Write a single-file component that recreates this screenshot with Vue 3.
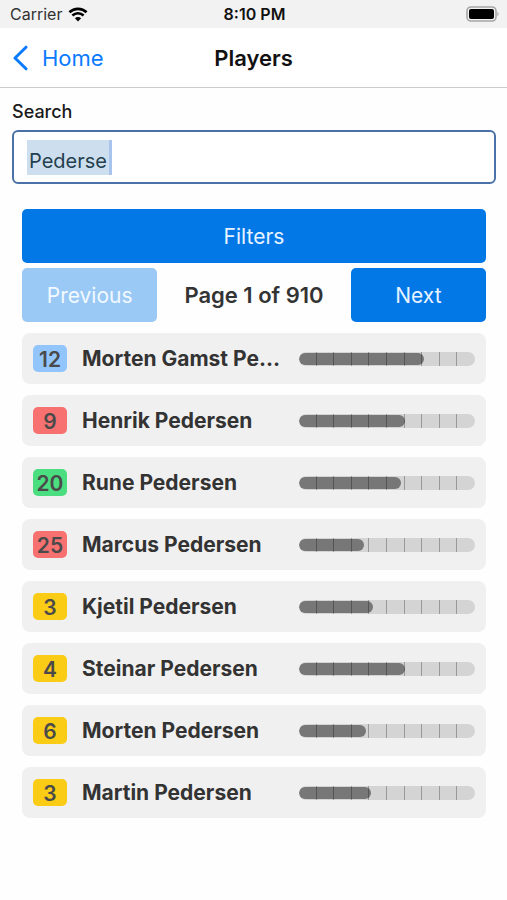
<script setup>
import { ref } from 'vue'

const search = ref('Pederse')
const page = ref(1)
const pageCount = 910

const players = [
  { number: 12, name: 'Morten Gamst Pedersen', position: 'midfielder', rating: 71 },
  { number: 9, name: 'Henrik Pedersen', position: 'forward', rating: 60 },
  { number: 20, name: 'Rune Pedersen', position: 'defender', rating: 58 },
  { number: 25, name: 'Marcus Pedersen', position: 'forward', rating: 37 },
  { number: 3, name: 'Kjetil Pedersen', position: 'keeper', rating: 42 },
  { number: 4, name: 'Steinar Pedersen', position: 'keeper', rating: 60 },
  { number: 6, name: 'Morten Pedersen', position: 'keeper', rating: 38 },
  { number: 3, name: 'Martin Pedersen', position: 'keeper', rating: 41 }
]
</script>

<template>
  <div class="app">
    <div class="status">
      <div class="carrier">
        <span>Carrier</span>
        <svg class="wifi" viewBox="0 0 20 15" aria-hidden="true">
          <path d="M1.4 5.3a12.4 12.4 0 0 1 17.2 0" />
          <path d="M4.4 8.5a8 8 0 0 1 11.2 0" />
          <path class="dot" d="M6.9 11.2a4.4 4.4 0 0 1 6.2 0L10 14.5z" />
        </svg>
      </div>
      <span class="time">8:10 PM</span>
      <svg class="battery" viewBox="0 0 34 16" aria-hidden="true">
        <rect x="2" y="1" width="29" height="14" rx="4" fill="none" stroke="#a6a6a6" stroke-width="1.6" />
        <rect x="4" y="3" width="25" height="10" rx="2" fill="#000" />
        <path d="M32.400 5.800c1.600.8 1.600 3.600 0 4.400z" fill="#a6a6a6" />
      </svg>
    </div>

    <header class="nav">
      <a class="back" href="#home">
        <svg class="chevron" viewBox="0 0 16 26" aria-hidden="true"><path d="M14 2.200L3 13l11 10.800" /></svg>
        <span>Home</span>
      </a>
      <h1>Players</h1>
    </header>

    <main>
      <div class="field">
        <label for="search">Search</label>
        <div class="box">
          <span class="selection" aria-hidden="true"></span>
          <input id="search" v-model="search" type="text" autocomplete="off" spellcheck="false">
        </div>
      </div>

      <div class="results">
        <button type="button">Filters</button>
        <div class="pager">
          <button type="button" :disabled="page === 1" @click="page--">Previous</button>
          <strong>Page {{ page }} of {{ pageCount }}</strong>
          <button type="button" :disabled="page === pageCount" @click="page++">Next</button>
        </div>
        <ul>
          <li v-for="(player, i) in players" :key="i">
            <span class="badge" :class="player.position">{{ player.number }}</span>
            <span class="name">{{ player.name }}</span>
            <div class="meter">
              <div class="fill" :style="{ width: player.rating + '%' }"></div>
              <div class="ticks"><i v-for="n in 10" :key="n"></i></div>
            </div>
          </li>
        </ul>
      </div>
    </main>
  </div>
</template>

<style>
body {
  margin: 0;
  background: #fefefe;
}
</style>

<style scoped>
.app {
  font-family: Inter, "Liberation Sans", sans-serif;
  color: #333;
}

.status {
  display: grid;
  grid-template-columns: 1fr auto 1fr;
  align-items: center;
  height: 28px;
  padding: 0 8px 0 10px;
  background: #f2f2f2;
  font-size: 16px;
  line-height: 28px;
}

.carrier {
  display: flex;
  align-items: center;
  gap: 6px;
}

.wifi {
  width: 20px;
  height: 15px;
  fill: none;
  stroke: #000;
  stroke-width: 2.6;
}

.wifi .dot {
  fill: #000;
  stroke: none;
}

.time {
  color: #111;
  font-weight: 600;
}

.battery {
  justify-self: end;
  width: 34px;
  height: 16px;
}

.nav {
  display: grid;
  grid-template-columns: 1fr auto 1fr;
  align-items: center;
  height: 59px;
  padding: 0 12px;
  border-bottom: 1px solid #ccc;
  background: #fff;
}

.back {
  display: flex;
  align-items: center;
  gap: 14px;
  color: #0a7aff;
  font-size: 22px;
  text-decoration: none;
}

.chevron {
  width: 16px;
  height: 26px;
  fill: none;
  stroke: currentColor;
  stroke-width: 3;
  stroke-linecap: round;
  stroke-linejoin: round;
}

h1 {
  margin: 0;
  color: #111;
  font-size: 22px;
  font-weight: 600;
}

main {
  padding: 12px 11px 12px 12px;
}

label {
  display: block;
  margin-bottom: 6px;
  color: #1a1a1a;
  font-size: 18px;
  font-weight: 500;
  line-height: 24px;
}

.box {
  position: relative;
  box-sizing: border-box;
  height: 54px;
  border: 2px solid #4a72a8;
  border-radius: 6px;
  background: #fff;
}

.selection {
  position: absolute;
  top: 8px;
  left: 13px;
  box-sizing: border-box;
  width: 85px;
  height: 35px;
  border-right: 3px solid #a9c4ec;
  background: #cddfee;
}

input {
  position: relative;
  box-sizing: border-box;
  width: 100%;
  height: 100%;
  padding: 8px 15px 0;
  border: 0;
  outline: 0;
  background: transparent;
  color: #24404f;
  font: inherit;
  font-size: 20px;
}

.results {
  display: flex;
  flex-direction: column;
  gap: 5px;
  padding: 25px 10px 0;
}

button {
  height: 54px;
  padding: 0;
  border: 0;
  border-radius: 5px;
  background: #0278e7;
  color: #e8f3ff;
  font: inherit;
  font-size: 21px;
}

button:disabled {
  background: #9ac9f5;
  color: #f2f9ff;
}

.pager {
  display: grid;
  grid-template-columns: 135fr 193fr 135fr;
  align-items: center;
}

strong {
  font-size: 22px;
  font-weight: 600;
  text-align: center;
}

ul {
  display: flex;
  flex-direction: column;
  gap: 11px;
  margin: 6px 0 0;
  padding: 0;
  list-style: none;
}

li {
  display: grid;
  grid-template-columns: 34px minmax(0, 232fr) minmax(0, 176fr);
  align-items: center;
  height: 51px;
  padding: 0 11px;
  border-radius: 8px;
  background: #f0f0f0;
  font-size: 21px;
  font-weight: 700;
}

.badge {
  height: 27px;
  border-radius: 5px;
  color: #4a4a4a;
  font-weight: 600;
  line-height: 30px;
  text-align: center;
}

.midfielder { background: #93c5fd; }
.forward { background: #f87171; }
.defender { background: #4ade80; }
.keeper { background: #facc15; }

.name {
  margin: 0 14px 0 15px;
  overflow: hidden;
  text-overflow: ellipsis;
  white-space: nowrap;
}

.meter {
  position: relative;
  box-sizing: border-box;
  height: 14px;
  padding: 1px 0;
  overflow: hidden;
  border-radius: 7px;
  background: #d4d4d4;
}

.fill {
  height: 12px;
  border-radius: 6px;
  background: #777;
}

.ticks {
  position: absolute;
  inset: 0;
  display: grid;
  grid-template-columns: repeat(10, 1fr);
}

.ticks i:not(:last-child) {
  border-right: 1px solid rgba(0, 0, 0, 0.28);
}
</style>
